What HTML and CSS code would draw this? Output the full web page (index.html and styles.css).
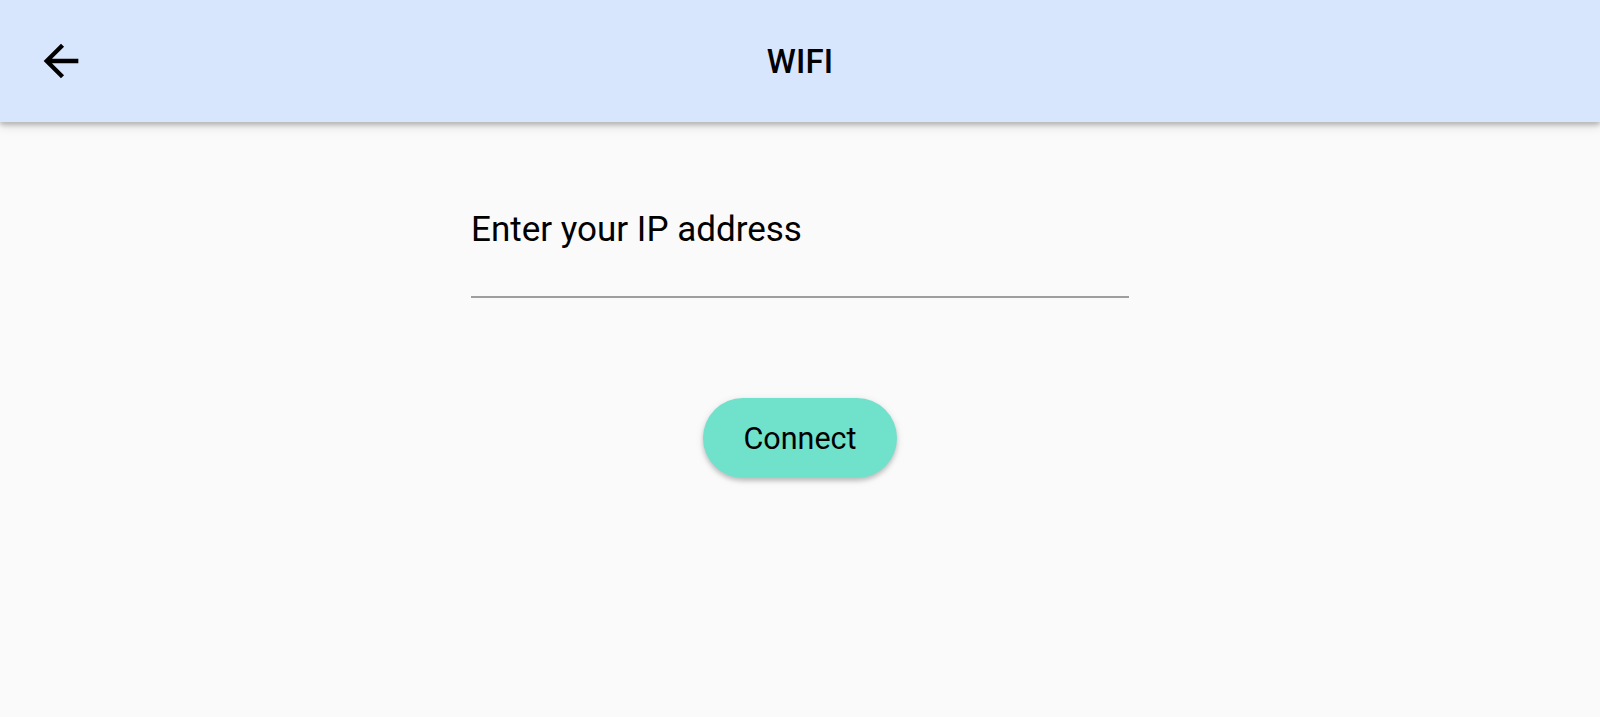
FILE: index.html
```html
<!DOCTYPE html>
<html>
<head>
<meta charset="utf-8">
<link rel="stylesheet" href="styles.css">
</head>
<body>
<header class="appbar">
  <div class="appbar-left">
    <button class="icon-btn" aria-label="Back">
      <svg viewBox="0 0 24 24" width="52" height="52"><path d="M20 11H7.83l5.59-5.59L12 4l-8 8 8 8 1.41-1.41L7.83 13H20v-2z" fill="#000"/></svg>
    </button>
  </div>
  <h1 class="title">WIFI</h1>
  <div class="appbar-right"></div>
</header>
<main class="content">
  <div class="field">
    <div class="field-label">Enter your IP address</div>
    <div class="field-line"></div>
  </div>
  <button class="connect">Connect</button>
</main>
</body>
</html>
```
FILE: styles.css
```css
html, body {
  margin: 0;
  padding: 0;
  background: #fafafa;
  font-family: Roboto, "Liberation Sans", sans-serif;
  height: 100%;
}
.appbar {
  height: 122px;
  background: #d8e6fd;
  display: grid;
  grid-template-columns: 1fr auto 1fr;
  align-items: center;
  box-shadow: 0 3px 4px rgba(0,0,0,0.18), 0 5px 9px rgba(0,0,0,0.12);
  position: relative;
  z-index: 1;
}
.appbar-left {
  display: flex;
  align-items: center;
  padding-left: 35px;
}
.icon-btn {
  border: 0;
  background: none;
  padding: 0;
  width: 52px;
  height: 52px;
  display: block;
}
.icon-btn svg { display: block; }
.title {
  margin: 0;
  font-size: 33px;
  font-weight: 500;
  color: #000;
  letter-spacing: 0.2px;
}
.content {
  display: flex;
  flex-direction: column;
  align-items: center;
  padding-top: 88px;
}
.field {
  width: 658px;
}
.field-label {
  font-size: 35px;
  line-height: 40px;
  color: #000;
  height: 40px;
}
.field-line {
  margin-top: 46px;
  height: 2px;
  background: #9e9e9e;
}
.connect {
  margin-top: 100px;
  width: 194px;
  height: 80px;
  border: 0;
  border-radius: 40px;
  background: #70e1cb;
  font-family: Roboto, "Liberation Sans", sans-serif;
  font-size: 30.5px;
  color: #000;
  box-shadow: 0 3px 4px rgba(0,0,0,0.18), 0 2px 8px rgba(0,0,0,0.1);
}
```
